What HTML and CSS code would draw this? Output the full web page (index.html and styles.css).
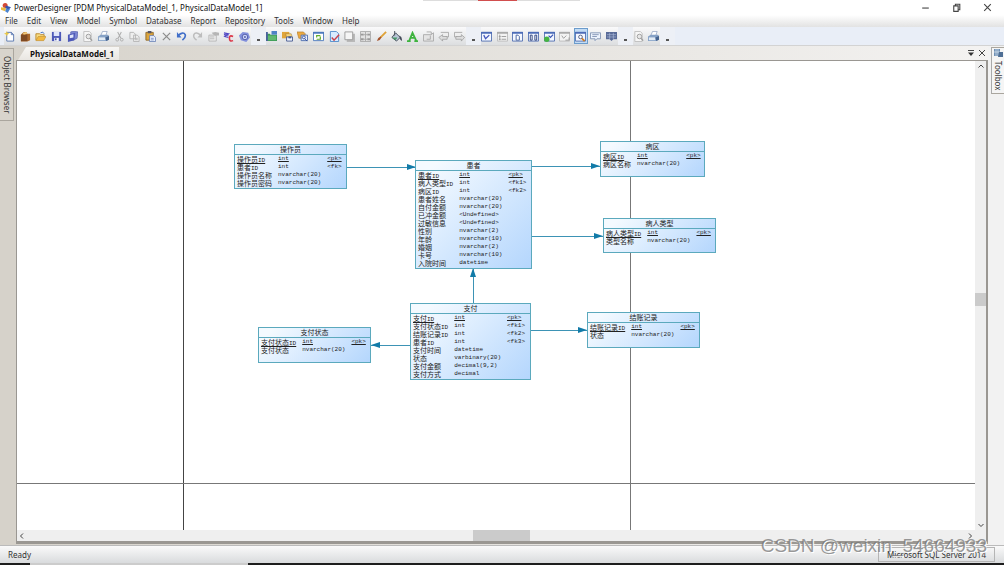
FILE: index.html
```html
<!DOCTYPE html>
<html lang="zh-CN">
<head>
<meta charset="utf-8">
<title>PowerDesigner</title>
<link rel="stylesheet" href="styles.css">
</head>
<body>
<svg class="defs" aria-hidden="true">
  <defs>
    <symbol id="i-new" viewBox="0 0 12 12"><path d="M3 1.500h5l2.500 2.500v7H3z" fill="#fff" stroke="#5876b0"/><path d="M8 1.500V4h2.500" fill="none" stroke="#5876b0"/><path d="M3 0l.8 2L6 3l-2.200.8L3 6l-.8-2.200L0 3l2.200-1z" fill="#e8c84a"/></symbol>
    <symbol id="i-project" viewBox="0 0 12 12"><path d="M1 4l3-3h3l1 2h3v7l-3 1.500H1z" fill="#a9672c"/><path d="M1 4h7v7H1z" fill="#7e4a24"/><path d="M3 2l4-1 1 2-4 1z" fill="#f0c878"/></symbol>
    <symbol id="i-open" viewBox="0 0 12 12"><path d="M1 10V3h4l1 1h4v2" fill="#f7dc82" stroke="#b9872c"/><path d="M1 10.500L3.500 6H12l-2.500 4.500z" fill="#f3b942" stroke="#b9872c" stroke-width=".6"/><path d="M6 2q3-2 4 1" stroke="#3c6bc0" fill="none"/></symbol>
    <symbol id="i-save" viewBox="0 0 12 12"><path d="M1 1h10v10H1z" fill="#4d59b8"/><path d="M3 1h6v4.500H3z" fill="#dfe6fa"/><path d="M3.500 7.500h5V11h-5z" fill="#f2f5fd"/><path d="M4.500 8h1.500v2H4.500z" fill="#344097"/></symbol>
    <symbol id="i-saveall" viewBox="0 0 12 12"><path d="M4 1l3-1 5 1-1 7-4 2H4z" fill="#7c87d2" stroke="#444f9f" stroke-width=".6"/><path d="M1 4l8-2-1 8-7 2z" fill="#4d59b8"/><path d="M3 4.500l4-1V7L3 8z" fill="#dfe6fa"/></symbol>
    <symbol id="i-preview" viewBox="0 0 12 12"><path d="M2 .5h6l2 2v9H2z" fill="#f6f6f6" stroke="#bdbdbd"/><circle cx="7" cy="6" r="2.500" fill="#e7e7e7" stroke="#9b9b9b"/><path d="M8.800 8L11 10.500" stroke="#9b9b9b" stroke-width="1.500"/></symbol>
    <symbol id="i-print" viewBox="0 0 12 12"><path d="M3 5l2-4.500h5L8.500 5z" fill="#fff" stroke="#7f93b8" stroke-width=".7"/><path d="M0 6l3-2h8l1 1.500v4L9 11H0z" fill="#86a2c6"/><path d="M1 7h7v3H1z" fill="#e2ebf5"/><path d="M8 7l4-1.500v4L9 11z" fill="#45638e"/></symbol>
    <symbol id="i-cut" viewBox="0 0 12 12"><path d="M4 1l3.500 7M8 1L4.500 8" stroke="#adadad" stroke-width="1.100"/><circle cx="3.500" cy="9.500" r="1.500" fill="none" stroke="#adadad"/><circle cx="8.500" cy="9.500" r="1.500" fill="none" stroke="#adadad"/></symbol>
    <symbol id="i-copy" viewBox="0 0 12 12"><path d="M1 1.500h4l2 2v5H1zM5 4.500h4l2 2v5H5z" fill="#eee" stroke="#b5b5b5"/><path d="M6.500 8h3M6.500 9.500h3" stroke="#b5b5b5"/></symbol>
    <symbol id="i-paste" viewBox="0 0 12 12"><path d="M1 1.500h8V10H1z" fill="#dca53c" stroke="#8f6a2c"/><path d="M3 0h4v2.500H3z" fill="#556"/><path d="M5 5h4.500L11.500 7v4.500H5z" fill="#e8effc" stroke="#5b74ae" stroke-width=".8"/><path d="M6.500 8h3M6.500 9.700h3" stroke="#5b74ae" stroke-width=".7"/></symbol>
    <symbol id="i-delete" viewBox="0 0 12 12"><path d="M2 2l8 8M10 2l-8 8" stroke="#8c8c8c" stroke-width="1.300"/></symbol>
    <symbol id="i-undo" viewBox="0 0 12 12"><path d="M2 5q6-5 8-1 1 3-3 6" fill="none" stroke="#416fc9" stroke-width="1.800"/><path d="M1 1v6h5z" fill="#416fc9"/></symbol>
    <symbol id="i-redo" viewBox="0 0 12 12"><path d="M10 5Q4 0 2 4 1 7 5 10" fill="none" stroke="#bdbdbd" stroke-width="1.600"/><path d="M11 1v6H6z" fill="#bdbdbd"/></symbol>
    <symbol id="i-props" viewBox="0 0 12 12"><path d="M1 4.500h8V11H1z" fill="#eee" stroke="#b5b5b5"/><path d="M2 6.500h5M2 8.500h5" stroke="#b5b5b5"/><path d="M4 2l4-1 4 1v3H8L6 4z" fill="#b5b5b5"/></symbol>
    <symbol id="i-convert" viewBox="0 0 12 12"><path d="M1 2l5 1-4 3 4 1M1 4l5 .5" fill="none" stroke="#5148c4" stroke-width="1.400"/><path d="M11 6Q7 4 7 8t4 2.500" fill="none" stroke="#dc3748" stroke-width="1.700"/></symbol>
    <symbol id="i-impact" viewBox="0 0 12 12"><path d="M0 5l4-4 6 1 2 5-4 5-6-2z" fill="#8290dc"/><circle cx="6.500" cy="6.500" r="3" fill="#c9d3f7" stroke="#4f59a6"/><circle cx="6.500" cy="6.500" r="1" fill="#4f59a6"/></symbol>
    <symbol id="i-diagram" viewBox="0 0 12 12"><path d="M0 3h4l1 1h7v7H0z" fill="#3c9c58"/><path d="M2 5h9v5H2z" fill="#61b86f"/><path d="M6 0h6v4H6z" fill="#4f82c5"/><path d="M0 1h2v10H0z" fill="#48629c"/></symbol>
    <symbol id="i-package" viewBox="0 0 12 12"><path d="M0 1h8v7H0z" fill="#e0a53b"/><path d="M4 3h6l1 3-6 1z" fill="#f7d77e" stroke="#986b28" stroke-width=".5"/><path d="M5 6.500h6.500V11H5z" fill="#eef3ff" stroke="#465b91"/><path d="M7 6v2h3V6" fill="#465b91"/></symbol>
    <symbol id="i-find" viewBox="0 0 12 12"><path d="M0 1h7l2 2v5H2z" fill="#eca93f" stroke="#a87326" stroke-width=".6"/><path d="M4.500 4.500h7v6h-7z" fill="#e7effd" stroke="#4c6cad"/><circle cx="7.500" cy="7" r="1.600" fill="none" stroke="#3854a0"/><path d="M8.500 8.500L11 11" stroke="#3854a0"/></symbol>
    <symbol id="i-refresh" viewBox="0 0 12 12"><path d="M.5 1.500h11v9H.500z" fill="#fff" stroke="#4c78bc"/><path d="M0 1h12v2H0z" fill="#4c78bc"/><path d="M4 7V5h4M8 6v3H4" fill="none" stroke="#65ad2c" stroke-width="1.300"/></symbol>
    <symbol id="i-check" viewBox="0 0 12 12"><path d="M1.500.5H8l2.500 2.500v8.500h-9z" fill="#d9ebff" stroke="#4e8acb"/><path d="M3 7l2.500 3L11 4" fill="none" stroke="#c9424f" stroke-width="1.600"/></symbol>
    <symbol id="i-shadow" viewBox="0 0 12 12"><path d="M3 3h9v9H3z" fill="#b9b9b9"/><path d="M1 1h8.500v8.500H1z" fill="#f5f5f5" stroke="#999"/></symbol>
    <symbol id="i-arrange" viewBox="0 0 12 12"><path d="M.5.5h11v11H.500z" fill="#e2e2e2" stroke="#aaa"/><path d="M1 3h3v2H1zM8 3h3v2H8zM1 8h3v2H1zM8 8h3v2H8z" fill="#999"/><path d="M4 4h4M4 9h4M6 1v10" stroke="#aaa"/></symbol>
    <symbol id="i-brush" viewBox="0 0 12 12"><path d="M11 1L5 7" stroke="#dfa238" stroke-width="2"/><path d="M1 11q1-4 4-5l1 1q-1 3-5 4z" fill="#a5532c"/></symbol>
    <symbol id="i-fill" viewBox="0 0 12 12"><path d="M5 2l5 5-4 4-5-4z" fill="#b9c6d7" stroke="#424957"/><path d="M4 0v5" stroke="#424957"/><path d="M9 5q4 2 2.500 6Q9 9 9 5z" fill="#424957"/><path d="M1 7h6l-2 3z" fill="#49996a"/></symbol>
    <symbol id="i-font" viewBox="0 0 12 12"><path d="M0 11h4M8 11h4M2.500 10.500L6 2l4 8.500M4 7.500h5" fill="none" stroke="#3eb33e" stroke-width="2"/></symbol>
    <symbol id="i-picture" viewBox="0 0 12 12"><path d="M.5 4h8l3-2v9H.500z" fill="#e4e4e4" stroke="#aaa"/><path d="M4 1h5v3M8 5v4H4" fill="none" stroke="#aaa"/></symbol>
    <symbol id="i-back" viewBox="0 0 12 12"><path d="M3 1.500h8.500v5H8" fill="#eee" stroke="#aaa"/><path d="M1 7l4-3v2h5v3H5v2z" fill="#ddd" stroke="#999" stroke-width=".8"/></symbol>
    <symbol id="i-forward" viewBox="0 0 12 12"><path d="M9 1.500H.500v5H4" fill="#eee" stroke="#aaa"/><path d="M11.500 7L8 4v2H2v3h6v2z" fill="#ddd" stroke="#999" stroke-width=".8"/></symbol>
    <symbol id="i-win" viewBox="0 0 12 12"><path d="M.5 1.500h11v9.500H.500z" fill="#f3f7ff" stroke="#526eb0"/><path d="M0 1h12v2H0z" fill="#4c6cb7"/></symbol>
    <symbol id="i-wingray" viewBox="0 0 12 12"><path d="M.5 1.500h11v9.500H.500z" fill="#f3f3f3" stroke="#bbb"/><path d="M0 1h12v2H0z" fill="#aaa"/></symbol>
    <symbol id="i-v" viewBox="0 0 12 12"><use href="#i-win"/><path d="M3 4.500l2 4 4-4" fill="none" stroke="#4255bc" stroke-width="1.400"/></symbol>
    <symbol id="i-tree" viewBox="0 0 12 12"><use href="#i-wingray"/><path d="M2 6h2M2 9h2M5 6h5M5 9h5M3 4v6" stroke="#999"/></symbol>
    <symbol id="i-doc" viewBox="0 0 12 12"><use href="#i-win"/><path d="M4.500 4.500h2l1.500 1.500v4H4.500z" fill="#fff" stroke="#45609f"/></symbol>
    <symbol id="i-docs" viewBox="0 0 12 12"><use href="#i-win"/><path d="M2.500 4.500h2V10h-2zM7.500 4.500h2V10h-2z" fill="#fff" stroke="#273d7b"/></symbol>
    <symbol id="i-green" viewBox="0 0 12 12"><use href="#i-win"/><path d="M5 5l2 2 3-3" fill="none" stroke="#3854b4" stroke-width="1.300"/><circle cx="3" cy="9" r="3" fill="#45b443"/></symbol>
    <symbol id="i-vgray" viewBox="0 0 12 12"><use href="#i-wingray"/><path d="M3 5l2 3 3-3M7 10h4V7" fill="none" stroke="#999"/></symbol>
    <symbol id="i-look" viewBox="0 0 12 12"><use href="#i-win"/><circle cx="6" cy="6.500" r="2" fill="#fff" stroke="#4b5b80"/><path d="M7.500 8l3 3" stroke="#ce7e27" stroke-width="2"/></symbol>
    <symbol id="i-note" viewBox="0 0 12 12"><path d="M.5 2h11v6.500h-4l-2 2v-2h-5z" fill="#edf3fd" stroke="#8295b4"/><path d="M2.500 4h7M2.500 6h5" stroke="#8295b4"/></symbol>
    <symbol id="i-grid" viewBox="0 0 12 12"><path d="M0 1h12v8H8l-2 2-2-2H0z" fill="#596b98"/><path d="M1 4h10M1 6.500h10M4 2v7M8 2v7" stroke="#b7c5e3" stroke-width=".6"/></symbol>
  </defs>
</svg>

<header>
  <div class="titlebar">
    <svg class="logo" viewBox="0 0 12 12" aria-hidden="true"><circle cx="5" cy="3" r="3" fill="#d44936"/><path d="M6 3l6 2-3 3-4-2z" fill="#3555ae"/><path d="M0 5l6 1-1 4-5-2z" fill="#e8b944"/><path d="M6 7h5l-3 5-3-2z" fill="#4a84cf"/></svg>
    <h1>PowerDesigner [PDM PhysicalDataModel_1, PhysicalDataModel_1]</h1>
    <div class="window-buttons">
      <button aria-label="Minimize"><svg viewBox="0 0 10 10"><path d="M2 5.500h6" class="line"/></svg></button>
      <button aria-label="Restore"><svg viewBox="0 0 10 10"><path d="M2.500 3.500h4v5h-4zM4 3V2h4v5H7" class="line"/></svg></button>
      <button aria-label="Close"><svg viewBox="0 0 10 10"><path d="M2 2l6 6M8 2L2 8" class="line"/></svg></button>
    </div>
  </div>
  <nav class="menubar" aria-label="Menu">
    <button>File</button><button>Edit</button><button>View</button><button>Model</button><button>Symbol</button><button>Database</button><button>Report</button><button>Repository</button><button>Tools</button><button>Window</button><button>Help</button>
  </nav>
  <div class="toolbar" role="toolbar" aria-label="Tools">
    <div class="group group-file">
      <button aria-label="New model"><svg><use href="#i-new"/></svg></button>
      <button aria-label="New project"><svg><use href="#i-project"/></svg></button>
      <button aria-label="Open"><svg><use href="#i-open"/></svg></button>
      <button aria-label="Save"><svg><use href="#i-save"/></svg></button>
      <button aria-label="Save all"><svg><use href="#i-saveall"/></svg></button>
      <button aria-label="Print preview"><svg><use href="#i-preview"/></svg></button>
      <button aria-label="Print"><svg><use href="#i-print"/></svg></button>
      <button aria-label="Cut"><svg><use href="#i-cut"/></svg></button>
      <button aria-label="Copy"><svg><use href="#i-copy"/></svg></button>
      <button aria-label="Paste"><svg><use href="#i-paste"/></svg></button>
      <button aria-label="Delete"><svg><use href="#i-delete"/></svg></button>
      <button aria-label="Undo"><svg><use href="#i-undo"/></svg></button>
      <button aria-label="Redo"><svg><use href="#i-redo"/></svg></button>
      <button aria-label="Properties"><svg><use href="#i-props"/></svg></button>
      <button aria-label="Name to code"><svg><use href="#i-convert"/></svg></button>
      <button aria-label="Impact analysis"><svg><use href="#i-impact"/></svg></button>
    </div>
    <button class="more" aria-label="More file tools"></button>
    <div class="group group-diagram">
      <button aria-label="New diagram"><svg><use href="#i-diagram"/></svg></button>
      <button aria-label="Package"><svg><use href="#i-package"/></svg></button>
      <button aria-label="Find"><svg><use href="#i-find"/></svg></button>
      <button aria-label="Refresh"><svg><use href="#i-refresh"/></svg></button>
      <button aria-label="Check model"><svg><use href="#i-check"/></svg></button>
      <button aria-label="Shadow"><svg><use href="#i-shadow"/></svg></button>
      <button aria-label="Arrange"><svg><use href="#i-arrange"/></svg></button>
      <button aria-label="Line style"><svg><use href="#i-brush"/></svg></button>
      <button aria-label="Fill"><svg><use href="#i-fill"/></svg></button>
      <button aria-label="Font"><svg><use href="#i-font"/></svg></button>
      <button aria-label="Custom symbol"><svg><use href="#i-picture"/></svg></button>
      <button aria-label="Previous"><svg><use href="#i-back"/></svg></button>
      <button aria-label="Next"><svg><use href="#i-forward"/></svg></button>
    </div>
    <button class="more" aria-label="More diagram tools"></button>
    <div class="group group-view">
      <button aria-label="View"><svg><use href="#i-v"/></svg></button>
      <button aria-label="Browser"><svg><use href="#i-tree"/></svg></button>
      <button aria-label="Output"><svg><use href="#i-doc"/></svg></button>
      <button aria-label="Results"><svg><use href="#i-docs"/></svg></button>
      <button aria-label="Validate"><svg><use href="#i-green"/></svg></button>
      <button aria-label="Mapping"><svg><use href="#i-vgray"/></svg></button>
      <button class="active" aria-label="Overview" aria-pressed="true"><svg><use href="#i-look"/></svg></button>
      <button aria-label="Comment"><svg><use href="#i-note"/></svg></button>
      <button aria-label="Table view"><svg><use href="#i-grid"/></svg></button>
    </div>
    <button class="more" aria-label="More view tools"></button>
    <div class="group group-print">
      <button aria-label="Page preview"><svg><use href="#i-preview"/></svg></button>
      <button aria-label="Print page"><svg><use href="#i-print"/></svg></button>
    </div>
    <button class="more" aria-label="More print tools"></button>
  </div>
</header>

<div class="workspace">
  <aside class="dock dock-left"><button>Object Browser</button></aside>
  <main>
    <div class="tabs">
      <button class="tab">PhysicalDataModel_1</button>
      <button class="tab-tool" aria-label="Window list"><svg viewBox="0 0 10 10"><path d="M2 2.500h6" class="line"/><path d="M2 4.500h6l-3 3.500z" fill="#333"/></svg></button>
      <button class="tab-tool" aria-label="Close diagram"><svg viewBox="0 0 10 10"><path d="M2 2l6 6M8 2L2 8" class="line"/></svg></button>
    </div>
    <div class="frame">
      <div class="canvas">
        <svg class="links" aria-hidden="true">
          <line x1="166" y1="0" x2="166" y2="100%" class="page-edge"/>
          <line x1="613" y1="0" x2="613" y2="100%" class="page-line"/>
          <line x1="0" y1="422" x2="100%" y2="422" class="page-line"/>
          <path class="link" d="M330 106H398M515 105H583M515 175H586M456 242V208M514 269H570M393 284H354"/>
          <path class="arrow" d="M399 106l-9-3v6zM583 105l-9-3v6zM586 175l-9-3v6zM456 207l-3 9h6zM570 269l-9-3v6zM354 284l9-3v6z"/>
        </svg>

        <section class="entity operator">
          <h2>操作员</h2>
          <table>
            <tr class="pk"><th>操作员<i>ID</i></th><td>int</td><td>&lt;pk&gt;</td></tr>
            <tr><th>患者<i>ID</i></th><td>int</td><td>&lt;fk&gt;</td></tr>
            <tr><th>操作员名称</th><td>nvarchar(20)</td><td></td></tr>
            <tr><th>操作员密码</th><td>nvarchar(20)</td><td></td></tr>
          </table>
        </section>

        <section class="entity patient">
          <h2>患者</h2>
          <table>
            <tr class="pk"><th>患者<i>ID</i></th><td>int</td><td>&lt;pk&gt;</td></tr>
            <tr><th>病人类型<i>ID</i></th><td>int</td><td>&lt;fk1&gt;</td></tr>
            <tr><th>病区<i>ID</i></th><td>int</td><td>&lt;fk2&gt;</td></tr>
            <tr><th>患者姓名</th><td>nvarchar(20)</td><td></td></tr>
            <tr><th>自付金额</th><td>nvarchar(20)</td><td></td></tr>
            <tr><th>已冲金额</th><td>&lt;Undefined&gt;</td><td></td></tr>
            <tr><th>过敏信息</th><td>&lt;Undefined&gt;</td><td></td></tr>
            <tr><th>性别</th><td>nvarchar(2)</td><td></td></tr>
            <tr><th>年龄</th><td>nvarchar(10)</td><td></td></tr>
            <tr><th>婚姻</th><td>nvarchar(2)</td><td></td></tr>
            <tr><th>卡号</th><td>nvarchar(10)</td><td></td></tr>
            <tr><th>入院时间</th><td>datetime</td><td></td></tr>
          </table>
        </section>

        <section class="entity ward">
          <h2>病区</h2>
          <table>
            <tr class="pk"><th>病区<i>ID</i></th><td>int</td><td>&lt;pk&gt;</td></tr>
            <tr><th>病区名称</th><td>nvarchar(20)</td><td></td></tr>
          </table>
        </section>

        <section class="entity patient-type">
          <h2>病人类型</h2>
          <table>
            <tr class="pk"><th>病人类型<i>ID</i></th><td>int</td><td>&lt;pk&gt;</td></tr>
            <tr><th>类型名称</th><td>nvarchar(20)</td><td></td></tr>
          </table>
        </section>

        <section class="entity payment">
          <h2>支付</h2>
          <table>
            <tr class="pk"><th>支付<i>ID</i></th><td>int</td><td>&lt;pk&gt;</td></tr>
            <tr><th>支付状态<i>ID</i></th><td>int</td><td>&lt;fk1&gt;</td></tr>
            <tr><th>结账记录<i>ID</i></th><td>int</td><td>&lt;fk2&gt;</td></tr>
            <tr><th>患者<i>ID</i></th><td>int</td><td>&lt;fk3&gt;</td></tr>
            <tr><th>支付时间</th><td>datetime</td><td></td></tr>
            <tr><th>状态</th><td>varbinary(20)</td><td></td></tr>
            <tr><th>支付金额</th><td>decimal(9,2)</td><td></td></tr>
            <tr><th>支付方式</th><td>decimal</td><td></td></tr>
          </table>
        </section>

        <section class="entity payment-state">
          <h2>支付状态</h2>
          <table>
            <tr class="pk"><th>支付状态<i>ID</i></th><td>int</td><td>&lt;pk&gt;</td></tr>
            <tr><th>支付状态</th><td>nvarchar(20)</td><td></td></tr>
          </table>
        </section>

        <section class="entity checkout">
          <h2>结账记录</h2>
          <table>
            <tr class="pk"><th>结账记录<i>ID</i></th><td>int</td><td>&lt;pk&gt;</td></tr>
            <tr><th>状态</th><td>nvarchar(20)</td><td></td></tr>
          </table>
        </section>
      </div>
      <div class="scroll scroll-y">
        <button aria-label="Scroll up"><svg viewBox="0 0 10 10"><path d="M2.500 6.500L5 4l2.500 2.500" class="line"/></svg></button>
        <div class="track"><div class="thumb"></div></div>
        <button aria-label="Scroll down"><svg viewBox="0 0 10 10"><path d="M2.500 4L5 6.500 7.500 4" class="line"/></svg></button>
      </div>
      <div class="scroll scroll-x">
        <button aria-label="Scroll left"><svg viewBox="0 0 10 10"><path d="M6 2.500L3.500 5 6 7.500" class="line"/></svg></button>
        <div class="track"><div class="thumb"></div></div>
        <button aria-label="Scroll right"><svg viewBox="0 0 10 10"><path d="M4 2.500L6.500 5 4 7.500" class="line"/></svg></button>
      </div>
    </div>
  </main>
  <aside class="dock dock-right"><button><svg viewBox="0 0 10 10" aria-hidden="true"><path d="M1 1h6v7H1z" fill="#6d8fb4"/><path d="M3 1v7M5 1v7M1 4h6" stroke="#dce8f4" stroke-width=".7"/><path d="M6 4h4v5H5z" fill="#4f6f95"/></svg>Toolbox</button></aside>
</div>

<footer>
  <span>Ready</span>
  <span class="dbms">Microsoft SQL Server 2014</span>
</footer>
<div class="screen-edge"></div>
<div class="watermark">CSDN @weixin_54664933</div>
</body>
</html>
```

FILE: styles.css
```css
* { box-sizing: border-box; }

body {
  margin: 0;
  height: 100vh;
  display: flex;
  flex-direction: column;
  overflow: hidden;
  position: relative;
  font-family: "Noto Sans", "Open Sans", sans-serif;
  font-size: 8px;
  color: #333;
  background: #fff;
}

button {
  margin: 0;
  padding: 0;
  border: 0;
  background: none;
  font: inherit;
  color: inherit;
  flex: none;
}

svg { display: block; }
.defs { position: absolute; width: 0; height: 0; }
.line { fill: none; stroke: #444; stroke-width: 1; }

/* Title bar */
.titlebar {
  display: flex;
  align-items: center;
  height: 15px;
  padding: 0 4px 0 1px;
  background:
    linear-gradient(#d14e4e, #d14e4e) 478px 0 / 39px 1px no-repeat,
    linear-gradient(#ddd, #ddd) 423px 0 / 157px 1px no-repeat,
    #fff;
}
.logo { width: 10px; height: 10px; }
h1 {
  flex: 1;
  margin: 0 0 0 3px;
  font-size: 8px;
  font-weight: 400;
  line-height: 15px;
  color: #111;
}
.window-buttons { display: flex; gap: 20px; padding-right: 7px; }
.window-buttons svg { width: 11px; height: 11px; }

.menubar {
  display: flex;
  gap: 9px;
  height: 12px;
  padding-left: 5px;
  line-height: 12px;
  background: linear-gradient(#fff, #e2e2e2);
}

/* Toolbar */
.toolbar {
  display: flex;
  align-items: stretch;
  height: 19px;
  padding-left: 4px;
  background: #e9eef7;
  border-bottom: 1px solid #d3d3d3;
}
.group {
  display: flex;
  flex: none;
  align-items: center;
  justify-content: space-between;
  background: linear-gradient(#fafafb, #dcdee0);
}
.group-file { width: 247px; }
.group-diagram { width: 200px; }
.group-view { width: 137px; }
.group-print { width: 27px; }
.group button { width: 12px; }
.group svg { width: 11px; height: 11px; }
.group .active {
  background: #c2dcf5;
  outline: 1px solid #6c9ccc;
  height: 14px;
}
.more {
  width: 15px;
  background: linear-gradient(#555, #555) 6px 12px / 3px 2px no-repeat, #edf0f6;
}

/* Workspace */
.workspace {
  flex: 1;
  display: flex;
  min-height: 0;
  background: linear-gradient(90deg, #d6d2ca, #f4f3f2);
}
.dock { width: 16px; flex: none; padding-top: 2px; }
.dock button {
  display: flex;
  align-items: center;
  gap: 3px;
  writing-mode: vertical-rl;
  width: 14px;
  border: 1px solid #aaa69e;
  border-left: 0;
  line-height: 12px;
}
.dock-left { background: #d6d2ca; }
.dock-left button { height: 73px; justify-content: center; background: #d8d4cc; }
.dock-right { background: #f2f2f2; padding-top: 1px; padding-left: 3px; }
.dock-right button {
  width: 13px;
  height: 47px;
  background: #f5f5f5;
  border-left: 1px solid #aaa;
  border-right: 0;
}
.dock svg { width: 10px; height: 10px; }

main { flex: 1; display: flex; flex-direction: column; min-width: 0; }
.tabs { display: flex; align-items: center; height: 14px; }
.tab {
  align-self: flex-end;
  height: 13px;
  padding: 0 5px 0 12px;
  margin-right: auto;
  margin-left: 2px;
  font-weight: 700;
  line-height: 12px;
  color: #111;
  background: linear-gradient(#f7f6f4, #e9e6e1);
  clip-path: polygon(8px 0, 100% 0, 100% 100%, 0 100%);
}
.tab-tool { width: 11px; }
.tab-tool svg { width: 10px; height: 10px; }

.frame {
  flex: 1;
  display: grid;
  grid-template-columns: 1fr 11px;
  grid-template-rows: 1fr 11px;
  min-height: 0;
  border: solid #9a9792;
  border-width: 1px 2px 3px 1px;
  background: #efefef;
  margin-bottom: 1px;
}
.canvas { position: relative; overflow: hidden; background: #fff; }
.links { position: absolute; inset: 0; width: 100%; height: 100%; }
.page-edge { stroke: #444; stroke-width: 1; shape-rendering: crispEdges; }
.page-line { stroke: #777; stroke-width: 1; shape-rendering: crispEdges; }
.link { fill: none; stroke: #3d93b5; shape-rendering: crispEdges; }
.arrow { fill: #127ba8; }

.scroll { display: flex; align-items: center; justify-content: space-between; background: #efefef; }
.scroll svg { width: 10px; height: 10px; }
.scroll-y { flex-direction: column; }
.track { flex: 1; display: flex; align-self: stretch; }
.thumb { background: #cbcbcb; }
.scroll-y .track { flex-direction: column; padding-top: 222px; }
.scroll-y .thumb { height: 13px; }
.scroll-x .track { padding-left: 446px; }
.scroll-x .thumb { width: 57px; }

/* Diagram tables */
.entity {
  position: absolute;
  border: 1px solid #5ba9bd;
  background: linear-gradient(135deg, #f4faff 10%, #b4d6fd);
  color: #222;
}
.entity h2 {
  margin: 0;
  height: 10px;
  border-bottom: 1px solid #5ba9bd;
  font: 400 7px/9px "Noto Sans CJK SC", sans-serif;
  text-align: center;
}
.entity table { border-collapse: collapse; margin: 0 0 0 2px; }
.entity tr { height: 8px; }
.entity th, .entity td {
  padding: 0 6px 0 0;
  height: 8px;
  line-height: 8px;
  font-weight: 400;
  text-align: left;
  white-space: nowrap;
  vertical-align: middle;
}
.entity th { font-family: "Noto Sans CJK SC", sans-serif; font-size: 7px; }
.entity td, .entity i {
  font-family: "Liberation Mono", monospace;
  font-size: 6px;
  font-style: normal;
}
.entity i { line-height: 0; }
.entity td:last-child { padding-right: 0; }
.entity .pk th, .entity .pk td { text-decoration: underline; }

.operator { left: 217px; top: 83px; width: 113px; height: 45px; }
.patient { left: 398px; top: 99px; width: 117px; height: 109px; }
.ward { left: 583px; top: 80px; width: 105px; height: 36px; }
.patient-type { left: 586px; top: 157px; width: 113px; height: 35px; }
.payment { left: 393px; top: 242px; width: 121px; height: 77px; }
.payment-state { left: 241px; top: 266px; width: 113px; height: 36px; }
.checkout { left: 570px; top: 251px; width: 113px; height: 36px; }

/* Status bar */
footer {
  display: flex;
  align-items: center;
  justify-content: space-between;
  height: 18px;
  padding: 0 9px 0 8px;
  border-top: 1px solid #bbb;
  background: linear-gradient(#fafafa, #d9dbdd);
}
.dbms {
  padding: 0 8px;
  border: 1px solid #b5b5b5;
  line-height: 13px;
}
.screen-edge {
  height: 2px;
  background: linear-gradient(#ccc, #ccc) 30px 0 / 218px 2px no-repeat, #1d1d1d;
}
.watermark {
  position: absolute;
  right: 17px;
  bottom: 8px;
  font: 19px/22px "Liberation Sans", sans-serif;
  color: rgba(120, 120, 120, 0.75);
  text-shadow: 1px 1px 0 #fff;
}
```
